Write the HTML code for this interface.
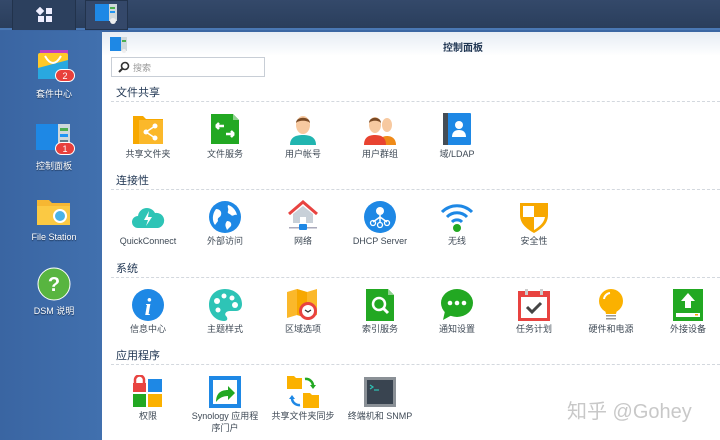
<!DOCTYPE html>
<html><head><meta charset="utf-8"><style>
*{margin:0;padding:0;box-sizing:border-box}
body{width:720px;height:440px;overflow:hidden;position:relative;background:#3b66a3;font-family:"Liberation Sans","Noto Sans CJK SC",sans-serif}
.a{position:absolute}
.tb{left:0;top:0;width:720px;height:30px;background:linear-gradient(#34496a,#2a3e5c);border-bottom:2px solid #4a78b4}
.desk{left:0;top:31px;width:102px;height:409px;background:linear-gradient(90deg,#3a65a2,#4170ae)}
.dl{width:102px;text-align:center;color:#fff;font-size:9px;text-shadow:0 1px 1px #1a3050}
.win{left:102px;top:32px;width:618px;height:408px;background:#fff}
.title{left:0;top:0;width:618px;height:24px;background:linear-gradient(#e6ecf4,#fff)}
.sh{left:14px;font-size:11px;color:#1f3552}
.dash{left:9px;width:609px;border-top:1px dashed #d3d8de}
.lb{width:90px;text-align:center;font-size:9px;color:#3f4a56;line-height:12px}
svg.i{position:absolute;width:34px;height:34px}
.badge{width:20px;height:13px;border-radius:7px;background:#e8403c;color:#fff;font-size:9px;text-align:center;line-height:13px;border:1px solid #fff}
</style></head><body>
<div class="a tb"></div>
<div class="a" style="left:12px;top:0;width:64px;height:30px;background:#2c405e;border-right:1px solid #22334c;border-left:1px solid #22334c"></div>
<svg class="a" style="left:36px;top:7px" width="18" height="16"><rect x="1" y="1" width="6" height="6" fill="#eef" transform="rotate(45 4 4)"/><rect x="10" y="1" width="6" height="6" fill="#eef"/><rect x="2" y="9" width="6" height="6" fill="#eef"/><rect x="10" y="9" width="6" height="6" fill="#eef"/></svg>
<div class="a" style="left:85px;top:0;width:43px;height:30px;background:#34486a;border:1px solid #22334c"></div>
<svg class="a" style="left:95px;top:4px" width="24" height="22"><rect width="14" height="17" fill="#1e88e5"/><rect x="14" width="8" height="17" fill="#cfd8dc"/><rect x="15" y="3" width="5" height="2" fill="#4caf50"/><rect x="15" y="7" width="5" height="2" fill="#2196f3"/><circle cx="18" cy="17" r="3" fill="#eee"/></svg>
<div class="a desk"></div>
<!-- sidebar -->
<svg class="a" style="left:36px;top:48px" width="36" height="34"><rect x="4" y="2" width="28" height="6" fill="#c040c0"/><rect x="2" y="5" width="30" height="26" rx="2" fill="#ffc928"/><path d="M2 20 L32 12 L32 31 L2 31Z" fill="#29a8e0"/><path d="M9 8 Q17 22 25 8" stroke="#fff" stroke-width="2" fill="none"/></svg>
<div class="a badge" style="left:55px;top:69px">2</div>
<div class="a dl" style="left:3px;top:87px">套件中心</div>
<svg class="a" style="left:36px;top:124px" width="36" height="30"><rect width="22" height="26" fill="#1e88e5"/><rect x="22" width="12" height="26" fill="#cfd8dc"/><rect x="24" y="4" width="8" height="3" fill="#4caf50"/><rect x="24" y="10" width="8" height="3" fill="#2196f3"/><rect x="24" y="16" width="8" height="3" fill="#607d8b"/></svg>
<div class="a badge" style="left:55px;top:142px">1</div>
<div class="a dl" style="left:3px;top:159px">控制面板</div>
<svg class="a" style="left:36px;top:196px" width="36" height="30"><path d="M1 4 h12 l3 3 h18 v22 h-33z" fill="#f6b732"/><rect x="1" y="10" width="33" height="19" fill="#fbc943"/><circle cx="24" cy="20" r="6" fill="#4ab3e8" stroke="#fff" stroke-width="2"/></svg>
<div class="a dl" style="left:3px;top:232px">File Station</div>
<svg class="a" style="left:37px;top:267px" width="34" height="34"><circle cx="17" cy="17" r="16" fill="#58b540" stroke="#fff" stroke-width="1"/><text x="17" y="24" font-size="20" font-weight="bold" fill="#fff" text-anchor="middle" font-family="Liberation Sans">?</text></svg>
<div class="a dl" style="left:3px;top:304px">DSM 说明</div>
<!-- window -->
<div class="a win">
<div class="a title"></div>
<svg class="a" style="left:8px;top:5px" width="18" height="16"><rect width="11" height="14" fill="#1e88e5"/><rect x="11" width="6" height="14" fill="#cfd8dc"/><rect x="12" y="3" width="4" height="2" fill="#4caf50"/><circle cx="14" cy="14" r="2" fill="#eee"/></svg>
<div class="a" style="left:341px;top:7px;font-size:10px;color:#1f3552;font-weight:bold">控制面板</div>
<div class="a" style="left:9px;top:25px;width:154px;height:20px;border:1px solid #c8ced6;background:#fff"></div>
<svg class="a" style="left:16px;top:29px" width="12" height="12"><circle cx="7" cy="5" r="3.5" stroke="#333" stroke-width="1.6" fill="none"/><path d="M4.5 7.5 L1 11" stroke="#333" stroke-width="2"/></svg>
<div class="a" style="left:31px;top:29px;font-size:9px;color:#999">搜索</div>

<div class="a sh" style="top:52px">文件共享</div><div class="a dash" style="top:69px"></div>
<div class="a sh" style="top:140px">连接性</div><div class="a dash" style="top:157px"></div>
<div class="a sh" style="top:228px">系统</div><div class="a dash" style="top:245px"></div>
<div class="a sh" style="top:315px">应用程序</div><div class="a dash" style="top:332px"></div>

<!-- row1 y 80 -->
<svg class="i" style="left:29px;top:80px" viewBox="0 0 34 34"><path d="M2 4h10l3 3h17v25H2z" fill="#f7a800"/><rect x="8" y="8" width="24" height="24" fill="#fbb82a"/><circle cx="24" cy="14" r="2.5" fill="#fff"/><circle cx="15" cy="20" r="2.5" fill="#fff"/><circle cx="24" cy="26" r="2.5" fill="#fff"/><path d="M24 14L15 20L24 26" stroke="#fff" stroke-width="1.5" fill="none"/></svg>
<div class="a lb" style="left:1px;top:116px">共享文件夹</div>
<svg class="i" style="left:106px;top:80px" viewBox="0 0 34 34"><path d="M3 2h22l6 6v24H3z" fill="#22a822"/><path d="M25 2v6h6" fill="#8fd18f"/><path d="M8 14h8M8 14l3-3M8 14l3 3M26 22h-8M26 22l-3-3M26 22l-3 3" stroke="#fff" stroke-width="2.5" fill="none"/></svg>
<div class="a lb" style="left:78px;top:116px">文件服务</div>
<svg class="i" style="left:184px;top:80px" viewBox="0 0 34 34"><path d="M4 33c0-8 6-10 13-10s13 2 13 10z" fill="#21b5b0"/><ellipse cx="17" cy="13" rx="7" ry="9" fill="#f7c9a0"/><path d="M10 11c0-7 14-7 14 0c-2-3-12-3-14 0z" fill="#7a4a25"/></svg>
<div class="a lb" style="left:156px;top:116px">用户帐号</div>
<svg class="i" style="left:261px;top:80px" viewBox="0 0 34 34"><ellipse cx="24" cy="13" rx="5" ry="7" fill="#f7c9a0"/><path d="M16 33c0-7 4-9 8-9s9 2 9 9z" fill="#ef8a18"/><path d="M1 33c0-8 5-10 11-10s11 2 11 10z" fill="#e84330"/><ellipse cx="12" cy="13" rx="6" ry="8" fill="#f7c9a0"/><path d="M6 11c0-7 12-7 12 0c-2-3-10-3-12 0z" fill="#7a4a25"/></svg>
<div class="a lb" style="left:233px;top:116px">用户群组</div>
<svg class="i" style="left:338px;top:80px" viewBox="0 0 34 34"><rect x="3" y="1" width="28" height="32" rx="1" fill="#1e88e5"/><rect x="3" y="1" width="5" height="32" fill="#444d56"/><circle cx="19" cy="13" r="4" fill="#fff"/><path d="M12 25c0-5 3-7 7-7s7 2 7 7z" fill="#fff"/></svg>
<div class="a lb" style="left:310px;top:116px">域/LDAP</div>

<!-- row2 y 168 -->
<svg class="i" style="left:29px;top:168px" viewBox="0 0 34 34"><path d="M7 28a6 6 0 0 1 0-12a9 9 0 0 1 17-3a7 7 0 0 1 3 15z" fill="#2ec4b6"/><path d="M18 11l-5 9h4l-2 6l6-9h-4z" fill="#fff"/></svg>
<div class="a lb" style="left:1px;top:203px">QuickConnect</div>
<svg class="i" style="left:106px;top:168px" viewBox="0 0 34 34"><circle cx="17" cy="17" r="16" fill="#1e88e5"/><path d="M8 9c4 0 6 3 5 6s-4 2-3 6l-3 4c-3-4-3-11 1-16zM20 5c4 1 8 5 9 10c-3-1-4 2-6 0s-4-1-3-4s-1-3 0-6zM19 21c3 0 5 2 4 5l-4 4c-1-3-3-5 0-9z" fill="#fff"/></svg>
<div class="a lb" style="left:78px;top:203px">外部访问</div>
<svg class="i" style="left:184px;top:168px" viewBox="0 0 34 34"><path d="M3 14L17 2L31 14" stroke="#e84340" stroke-width="3" fill="none"/><path d="M7 14L17 6L27 14v9H7z" fill="#c8d0d8"/><rect x="14" y="17" width="6" height="6" fill="#fff"/><rect x="3" y="27" width="28" height="1.5" fill="#aab"/><rect x="13" y="24" width="8" height="6" rx="1" fill="#1e88e5"/></svg>
<div class="a lb" style="left:156px;top:203px">网络</div>
<svg class="i" style="left:261px;top:168px" viewBox="0 0 34 34"><circle cx="17" cy="17" r="16" fill="#1e88e5"/><circle cx="17" cy="11" r="4" fill="#fff"/><path d="M17 15v8M17 17l-7 5M17 17l7 5" stroke="#fff" stroke-width="1.5"/><circle cx="10" cy="23" r="2.5" stroke="#fff" fill="none" stroke-width="1.3"/><circle cx="17" cy="25" r="2.5" stroke="#fff" fill="none" stroke-width="1.3"/><circle cx="24" cy="23" r="2.5" stroke="#fff" fill="none" stroke-width="1.3"/></svg>
<div class="a lb" style="left:233px;top:203px">DHCP Server</div>
<svg class="i" style="left:338px;top:168px" viewBox="0 0 34 34"><path d="M2 12a21 21 0 0 1 30 0M7 17a14 14 0 0 1 20 0M12 22a7 7 0 0 1 10 0" stroke="#1e88e5" stroke-width="3" fill="none"/><circle cx="17" cy="28" r="4" fill="#22a822"/></svg>
<div class="a lb" style="left:310px;top:203px">无线</div>
<svg class="i" style="left:415px;top:168px" viewBox="0 0 34 34"><path d="M3 3h28v12c0 9-7 14-14 18C10 29 3 24 3 15z" fill="#f7a800"/><path d="M6 6h11v11H6zM17 17h11c-1 6-6 10-11 13z" fill="#fff"/></svg>
<div class="a lb" style="left:387px;top:203px">安全性</div>

<!-- row3 y 256 -->
<svg class="i" style="left:29px;top:256px" viewBox="0 0 34 34"><circle cx="17" cy="17" r="16" fill="#1e88e5"/><text x="17" y="27" font-size="24" font-style="italic" font-weight="bold" fill="#fff" text-anchor="middle" font-family="Liberation Serif">i</text></svg>
<div class="a lb" style="left:1px;top:291px">信息中心</div>
<svg class="i" style="left:106px;top:256px" viewBox="0 0 34 34"><path d="M17 1C7 1 1 8 1 17s7 16 15 16c4 0 4-3 2-5s0-5 4-5h6c4 0 6-3 6-7C34 7 26 1 17 1z" fill="#2ec4b6"/><circle cx="9" cy="13" r="3" fill="#fff"/><circle cx="16" cy="8" r="2.5" fill="#fff"/><circle cx="24" cy="10" r="2.5" fill="#fff"/><circle cx="27" cy="17" r="3" fill="#fff"/><circle cx="10" cy="22" r="2.5" fill="#fff"/></svg>
<div class="a lb" style="left:78px;top:291px">主题样式</div>
<svg class="i" style="left:184px;top:256px" viewBox="0 0 34 34"><path d="M1 4l10-3l10 3l10-3v26l-10 3l-10-3L1 30z" fill="#fbb82a"/><path d="M11 1v26l10 3V4z" fill="#f7a800"/><circle cx="22" cy="23" r="9" fill="#e84340"/><circle cx="22" cy="23" r="6" fill="#fff"/><path d="M19 22l3 2l3-2" stroke="#333" stroke-width="1.3" fill="none"/></svg>
<div class="a lb" style="left:156px;top:291px">区域选项</div>
<svg class="i" style="left:261px;top:256px" viewBox="0 0 34 34"><path d="M3 1h22l6 6v26H3z" fill="#22a822"/><path d="M25 1v6h6" fill="#8fd18f"/><circle cx="16" cy="16" r="6" stroke="#fff" stroke-width="2.5" fill="none"/><path d="M20 20l5 5" stroke="#fff" stroke-width="3"/></svg>
<div class="a lb" style="left:233px;top:291px">索引服务</div>
<svg class="i" style="left:338px;top:256px" viewBox="0 0 34 34"><ellipse cx="17" cy="15" rx="16" ry="14" fill="#22a822"/><path d="M5 23l-2 9l9-5z" fill="#22a822"/><circle cx="10" cy="15" r="2.3" fill="#fff"/><circle cx="17" cy="15" r="2.3" fill="#fff"/><circle cx="24" cy="15" r="2.3" fill="#fff"/></svg>
<div class="a lb" style="left:310px;top:291px">通知设置</div>
<svg class="i" style="left:415px;top:256px" viewBox="0 0 34 34"><rect x="1" y="3" width="32" height="30" fill="#e84340"/><rect x="4" y="9" width="26" height="21" fill="#fff"/><rect x="8" y="1" width="3" height="6" fill="#ccc"/><rect x="23" y="1" width="3" height="6" fill="#ccc"/><path d="M10 19l5 5l9-9" stroke="#444" stroke-width="3" fill="none"/></svg>
<div class="a lb" style="left:387px;top:291px">任务计划</div>
<svg class="i" style="left:492px;top:256px" viewBox="0 0 34 34"><circle cx="17" cy="13" r="12" fill="#fbb100"/><path d="M11 22h12l-1 4H12z" fill="#fbb100"/><rect x="12" y="27" width="10" height="1.5" fill="#999"/><rect x="12" y="30" width="10" height="1.5" fill="#999"/><path d="M10 11a7 7 0 0 1 6-6" stroke="#fff" stroke-width="2" fill="none"/></svg>
<div class="a lb" style="left:464px;top:291px">硬件和电源</div>
<svg class="i" style="left:569px;top:256px" viewBox="0 0 34 34"><rect x="2" y="1" width="30" height="32" fill="#22a822"/><path d="M17 5l7 8h-4v7h-6v-7h-4z" fill="#fff"/><rect x="5" y="25" width="24" height="4" fill="#fff"/><rect x="24" y="26" width="3" height="1.5" fill="#f7a800"/></svg>
<div class="a lb" style="left:541px;top:291px">外接设备</div>

<!-- row4 y 343 -->
<svg class="i" style="left:29px;top:343px" viewBox="0 0 34 34"><rect x="17" y="4" width="14" height="13" fill="#1e88e5"/><rect x="2" y="19" width="13" height="13" fill="#22a822"/><rect x="17" y="19" width="14" height="13" fill="#fbb100"/><rect x="2" y="8" width="13" height="9" fill="#e84340"/><path d="M4 8V5a4.5 4.5 0 0 1 9 0v3" stroke="#e84340" stroke-width="2.5" fill="none"/></svg>
<div class="a lb" style="left:1px;top:378px">权限</div>
<svg class="i" style="left:106px;top:343px" viewBox="0 0 34 34"><rect x="1" y="1" width="32" height="32" fill="#1e88e5"/><rect x="5" y="5" width="24" height="24" fill="#fff"/><path d="M8 27c0-8 4-12 12-12v-4l7 7l-7 7v-4c-5 0-9 2-12 6z" fill="#22a822"/></svg>
<div class="a lb" style="left:78px;top:378px">Synology 应用程<br>序门户</div>
<svg class="i" style="left:184px;top:343px" viewBox="0 0 34 34"><path d="M1 1h7l2 2h6v11H1z" fill="#fbb100"/><path d="M17 18h7l2 2h7v13H17z" fill="#fbb100"/><path d="M19 4a7 7 0 0 1 8 7" stroke="#22a822" stroke-width="2.5" fill="none"/><path d="M24 10h6l-3 4z" fill="#22a822"/><path d="M14 30a7 7 0 0 1-8-7" stroke="#1e88e5" stroke-width="2.5" fill="none"/><path d="M3 24l3-4l3 4z" fill="#1e88e5"/></svg>
<div class="a lb" style="left:156px;top:378px">共享文件夹同步</div>
<svg class="i" style="left:261px;top:343px" viewBox="0 0 34 34"><rect x="1" y="2" width="32" height="30" fill="#8a9096"/><rect x="4" y="5" width="26" height="24" fill="#394450"/><path d="M7 10l3 2l-3 2" stroke="#2ec4b6" stroke-width="1.2" fill="none"/><path d="M11 15h5" stroke="#2ec4b6" stroke-width="1.2"/></svg>
<div class="a lb" style="left:233px;top:378px">终端机和 SNMP</div>
</div>
<div class="a" style="left:567px;top:395px;font-size:20px;color:rgba(190,190,190,0.85)">知乎 @Gohey</div>
</body></html>
